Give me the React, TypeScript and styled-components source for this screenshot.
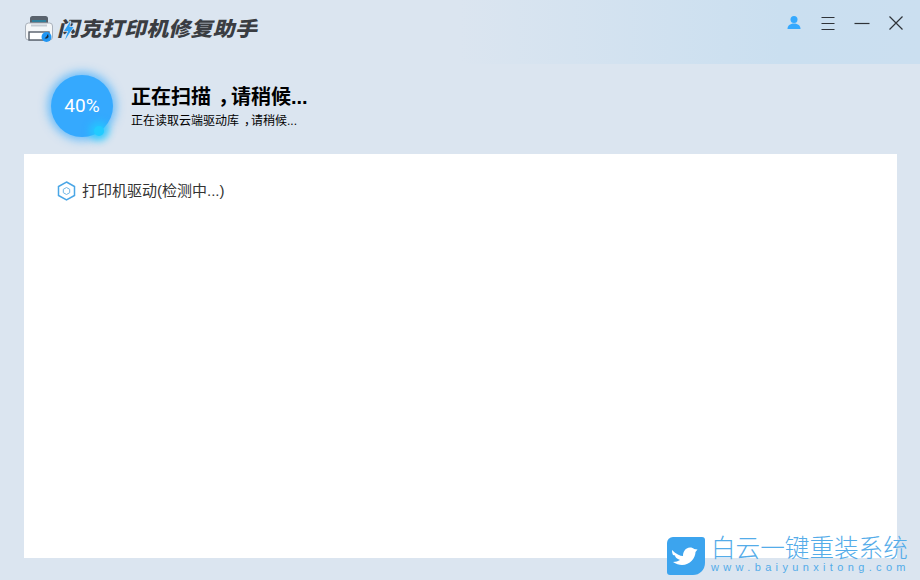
import React from 'react';
import styled, { createGlobalStyle } from 'styled-components';

const CJK = '"Liberation Sans", "Noto Sans CJK SC", sans-serif';

const GlobalStyle = createGlobalStyle`
  html, body {
    margin: 0;
    padding: 0;
    height: 100%;
  }
  #root {
    height: 100%;
  }
  body {
    font-family: ${CJK};
    background: #dbe5f0;
  }
`;

const Window = styled.div`
  position: relative;
  width: 920px;
  height: 580px;
  overflow: hidden;
  background: #dbe5f0;
  display: flex;
  flex-direction: column;
`;

const TitleBar = styled.div`
  height: 64px;
  flex-shrink: 0;
  display: flex;
  align-items: flex-start;
  justify-content: space-between;
  padding: 15px 16px 0 24px;
  box-sizing: border-box;
  background: linear-gradient(90deg, #dbe5f0 0%, #dbe5f0 50%, #cadff0 85%, #cbdff0 100%);
`;

const Brand = styled.div`
  display: flex;
  align-items: center;
  gap: 5px;
`;

const BrandName = styled.div`
  position: relative;
`;

const BrandText = styled.div`
  font-size: 20px;
  line-height: 26px;
  font-weight: 900;
  letter-spacing: 0.2px;
  color: #3a3d42;
  transform-origin: left center;
  transform: skewX(-14deg) scaleX(1.1);
  white-space: nowrap;
`;

const Bolt = styled.svg`
  position: absolute;
  left: 4px;
  top: 4px;
  width: 11px;
  height: 20px;
`;

const Controls = styled.div`
  display: flex;
  align-items: center;
  gap: 18px;
`;

const ControlIcon = styled.svg`
  width: 16px;
  height: 16px;
  display: block;
`;

const ScanHeader = styled.div`
  height: 90px;
  flex-shrink: 0;
  display: flex;
  align-items: flex-start;
  padding: 11px 0 0 51px;
  box-sizing: border-box;
  gap: 18px;
`;

const Progress = styled.div`
  position: relative;
  width: 62px;
  height: 62px;
  padding-bottom: 2px;
  box-sizing: border-box;
  border-radius: 50%;
  background: #35a9fe;
  box-shadow: 0 0 10px 3px rgba(53, 169, 254, 0.7);
  color: #fff;
  font-family: Roboto, sans-serif;
  font-weight: 400;
  font-size: 19px;
  display: flex;
  align-items: center;
  justify-content: center;
`;

const ProgressDot = styled.span`
  position: absolute;
  right: 9px;
  bottom: 1px;
  width: 10px;
  height: 10px;
  border-radius: 50%;
  background: #22cbff;
  box-shadow: 0 0 7px 5px rgba(34, 203, 255, 0.75);
`;

const ScanText = styled.div`
  padding-top: 8px;
  color: #000;
`;

const ScanTitle = styled.div`
  font-size: 20px;
  line-height: 28px;
  font-weight: 700;
`;

const ScanSub = styled.div`
  font-size: 12px;
  line-height: 18px;
  margin-top: 1px;
`;

// the comma sits mid-cell in the original font
const Comma = styled.span<{ $shift: number }>`
  margin-left: ${({ $shift }) => $shift}px;
  letter-spacing: -${({ $shift }) => $shift}px;
`;

const Card = styled.div`
  margin: 0 23px 0 24px;
  height: 404px;
  background: #fff;
  padding: 27px 33px;
  box-sizing: border-box;
`;

const CheckItem = styled.div`
  display: flex;
  align-items: center;
  gap: 6px;
  font-size: 15px;
  line-height: 20px;
  color: #333;
`;

const Watermark = styled.div`
  position: absolute;
  left: 667px;
  top: 537px;
  display: flex;
  gap: 6px;
`;

const BirdTile = styled.div`
  width: 38px;
  height: 38px;
  padding: 9px 0 0 5px;
  box-sizing: border-box;
  background: #3ca4ee;
  border-radius: 6px 3px 12px 3px;
`;

const WatermarkText = styled.div`
  color: #54ace9;
`;

const WatermarkTitle = styled.div`
  font-size: 24.6px;
  font-weight: 300;
  line-height: 24px;
  white-space: nowrap;
`;

const WatermarkUrl = styled.div`
  font-size: 11px;
  line-height: 13px;
  letter-spacing: 4.35px;
  white-space: nowrap;
`;

function PrinterLogo() {
  return (
    <svg width="30" height="28" viewBox="0 0 30 28">
      <path d="M6 3.5C6 2 7 1 8.5 1h13C23 1 24 2 24 3.5V8H6z" fill="#59626d" />
      <rect x="8" y="5" width="14" height="2" fill="#2f7f9c" />
      <rect x="1.5" y="8" width="27" height="17" rx="3" fill="#f4f6f8" stroke="#aab2bc" />
      <rect x="5" y="17" width="20" height="8" fill="#fff" stroke="#555d68" strokeWidth="1.4" />
      <rect x="7" y="9.5" width="16" height="2" fill="#c4cbd3" />
      <circle cx="22.5" cy="22" r="5" fill="#2196f3" />
      <path d="M20.5 23.5l2.5-2.5 .2-1.5 1.3 .3-.4 1.6 1 .2-2 2z" fill="#1c2a3a" />
    </svg>
  );
}

function App() {
  return (
    <Window>
      <GlobalStyle />
      <TitleBar>
        <Brand>
          <PrinterLogo />
          <BrandName>
            <BrandText>闪克打印机修复助手</BrandText>
            <Bolt viewBox="0 0 11 20">
              <path
                d="M7.5 1L1 11h4L2 20 10.5 7H6.500z"
                fill="#2ea2f6"
                stroke="#dbe5f0"
                strokeWidth="1.5"
                paintOrder="stroke"
              />
            </Bolt>
          </BrandName>
        </Brand>
        <Controls>
          <ControlIcon viewBox="0 0 16 16">
            <circle cx="8" cy="4.5" r="3.5" fill="#35a9fe" />
            <path d="M1.5 14c0-3.2 2.5-5.5 6.5-5.5s6.5 2.3 6.5 5.5z" fill="#35a9fe" />
          </ControlIcon>
          <ControlIcon viewBox="0 0 16 16">
            <path d="M1.5 2.5h13M1.5 8.5h13M1.5 14.5h13" stroke="#2f3338" strokeWidth="1.2" />
          </ControlIcon>
          <ControlIcon viewBox="0 0 16 16">
            <path d="M0.5 8.5h15" stroke="#2f3338" strokeWidth="1.2" />
          </ControlIcon>
          <ControlIcon viewBox="0 0 16 16">
            <path d="M1.5 1.5l13 13M14.5 1.5l-13 13" stroke="#2f3338" strokeWidth="1.2" />
          </ControlIcon>
        </Controls>
      </TitleBar>
      <ScanHeader>
        <Progress>
          40%
          <ProgressDot />
        </Progress>
        <ScanText>
          <ScanTitle>
            正在扫描<Comma $shift={7}>，</Comma>请稍候...
          </ScanTitle>
          <ScanSub>
            正在读取云端驱动库<Comma $shift={5}>，</Comma>请稍候...
          </ScanSub>
        </ScanText>
      </ScanHeader>
      <Card>
        <CheckItem>
          <svg width="19" height="20" viewBox="0 0 19 20" fill="none">
            <path d="M9.5 1l8 4.5v9l-8 4.5-8-4.5v-9z" stroke="#4aa6e6" strokeWidth="1.5" />
            <path d="M9.5 6.5l3.2 1.8v3.4l-3.2 1.8-3.2-1.8V8.3z" stroke="#6fb6e6" strokeWidth="1" />
          </svg>
          打印机驱动(检测中...)
        </CheckItem>
      </Card>
      <Watermark>
        <BirdTile>
          <svg width="26" height="20" viewBox="0 0 26 20" display="block">
            <path
              d="M0 4c4 4 8 6 11 6 0-4 2-8 7-8.5 2 0 3 .5 4 1.5l3.5.5-2 2.5C23.5 12 18 19 10 19c-3 0-6-1-9-3 3 0 5-1 7-2-3-1-5-3-5-4.5L1 9C0 7 0 5 0 4z"
              fill="#fff"
            />
          </svg>
        </BirdTile>
        <WatermarkText>
          <WatermarkTitle>白云一键重装系统</WatermarkTitle>
          <WatermarkUrl>www.baiyunxitong.com</WatermarkUrl>
        </WatermarkText>
      </Watermark>
    </Window>
  );
}

export default App;
